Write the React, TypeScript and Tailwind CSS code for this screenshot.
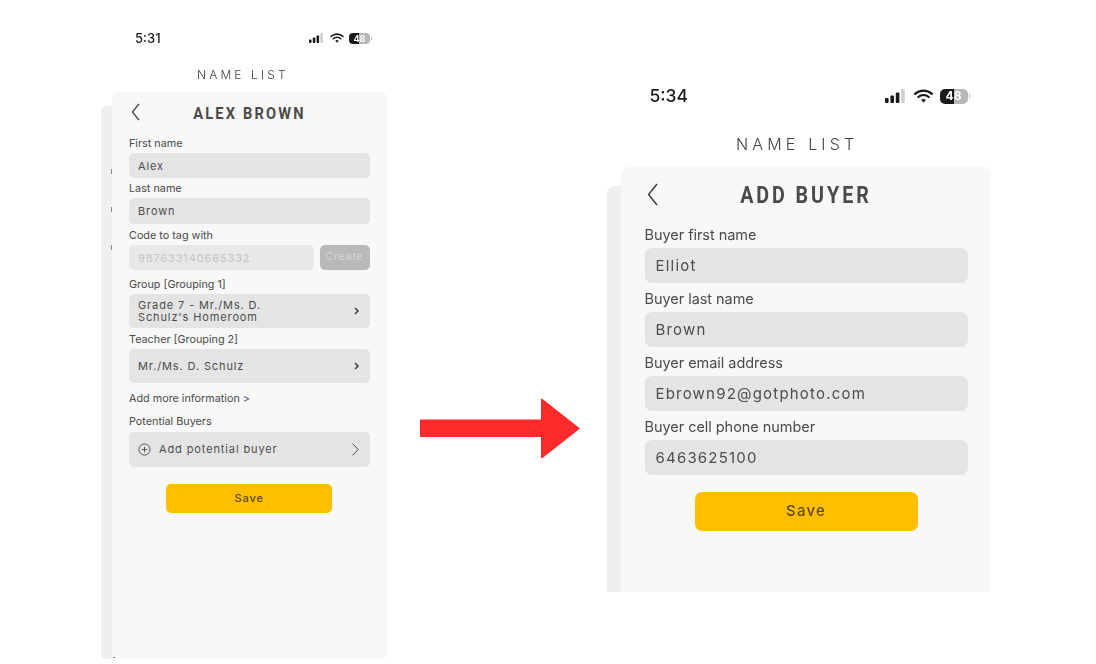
const sans = "font-['Inter','Liberation_Sans',sans-serif]"

const StatusIcons = ({ big }: { big?: boolean }) => (
  <div className="flex items-center">
    <svg viewBox="0 0 20 14" className={big ? "w-[20px] h-[14px]" : "w-[14px] h-[10px]"}>
      <rect x="0" y="9" width="3.6" height="5" rx="1" fill="#1a1a1a" />
      <rect x="5.4" y="6.4" width="3.6" height="7.6" rx="1" fill="#1a1a1a" />
      <rect x="10.8" y="3.4" width="3.6" height="10.6" rx="1" fill="#1a1a1a" />
      <rect x="16.2" y="0" width="3.6" height="14" rx="1" fill="#cfcfcf" />
    </svg>
    <svg viewBox="0 0 20 15" className={big ? "ml-[9px] w-[19px] h-[14px]" : "ml-[7px] w-[14px] h-[10px]"}>
      <path d="M1 5.2C6 .6 14 .6 19 5.2" fill="none" stroke="#1a1a1a" strokeWidth="2.4" strokeLinecap="round" />
      <path d="M4.4 8.6c3.2-2.9 8-2.9 11.2 0" fill="none" stroke="#1a1a1a" strokeWidth="2.4" strokeLinecap="round" />
      <path d="M7.4 11.6c1.5-1.3 3.7-1.3 5.2 0L10 14.6z" fill="#1a1a1a" />
    </svg>
    <div className={big ? "ml-[7px] flex items-center" : "ml-[5px] flex items-center"}>
      <div
        className={
          (big ? "w-[28px] h-[15px] text-[12px] rounded-[5px]" : "w-[21px] h-[11px] text-[9px] rounded-[4px]") +
          ` flex items-center justify-center overflow-hidden font-bold leading-none text-white bg-[linear-gradient(90deg,#1a1a1a_0,#1a1a1a_50%,#b8b8b8_50%,#b8b8b8_100%)] ${sans}`
        }
      >
        48
      </div>
      <div className={big ? "ml-[1px] w-[1px] h-[4px] bg-[#b8b8b8]" : "ml-[1px] w-[1px] h-[3px] bg-[#b8b8b8]"} />
    </div>
  </div>
)

const Back = ({ big }: { big?: boolean }) => (
  <svg viewBox="0 0 11 23" className={big ? "w-[11px] h-[23px]" : "w-[9px] h-[18px]"}>
    <path d="M10 1 1.6 11.5 10 22" fill="none" stroke="#3d3d3d" strokeWidth={big ? 1.5 : 1.6} />
  </svg>
)

const Chevron = () => (
  <svg viewBox="0 0 5 8" className="w-[5px] h-[8px]">
    <path d="M1 1l3 3-3 3" fill="none" stroke="#333" strokeWidth="1.4" />
  </svg>
)

const Label = ({ text, className }: { text: string; className?: string }) => (
  <p className={`h-[15px] text-[10.8px] leading-[15px] text-[#4a4a4a] ${sans} ${className ?? ""}`}>{text}</p>
)

const SmallInput = ({ value, className }: { value: string; className?: string }) => (
  <div
    className={`flex items-center rounded-[5px] bg-[#e4e4e4] pl-[9px] pt-[1px] text-[11px] tracking-[0.08em] text-[#4d4d4d] ${sans} ${className ?? ""}`}
  >
    {value}
  </div>
)

const BigField = ({ label, value }: { label: string; value: string }) => (
  <div>
    <p className={`h-[22px] text-[14.5px] leading-[22px] tracking-[-0.003em] text-[#4a4a4a] ${sans}`}>{label}</p>
    <div
      className={`mt-[2px] flex h-[35px] items-center rounded-[7px] bg-[#e4e4e4] pl-[11px] pt-[2px] text-[15px] tracking-[0.08em] text-[#4d4d4d] ${sans}`}
    >
      {value}
    </div>
  </div>
)

const App = () => {
  return (
    <div className="flex h-[664px] w-[1096px] items-start overflow-hidden bg-white pl-[101px]">
      <div className="flex h-[659px] w-[286px] flex-col pt-[29px] blur-[0.35px]">
        <div className="flex h-[18px] items-center justify-between pl-[34px] pr-[15px]">
          <span className={`pt-[1px] text-[13px] font-medium text-[#1a1a1a] ${sans}`}>5:31</span>
          <StatusIcons />
        </div>
        <p
          className={`mt-[20px] h-[16px] pl-[96px] text-[12px] font-light leading-[16px] tracking-[0.26em] text-[#3f3f3f] ${sans}`}
        >
          NAME LIST
        </p>
        <div className="mt-[9px] flex flex-1">
          <div className="relative mt-[14px] w-[11px] rounded-l-[5px] bg-[#efefef]">
            <div className="absolute right-0 top-[63px] h-[5px] w-[1px] bg-[#8a8a8a]" />
            <div className="absolute right-0 top-[101px] h-[5px] w-[1px] bg-[#8a8a8a]" />
            <div className="absolute right-0 top-[139px] h-[5px] w-[1px] bg-[#8a8a8a]" />
          </div>
          <div className="relative flex-1 rounded-[6px] rounded-bl-none bg-[#f8f8f8] pl-[17px] pr-[17.5px]">
            <div className="absolute bottom-[1px] left-[1px] h-[1px] w-[2px] bg-[#777777]" />
            <div className="relative flex h-[43.5px] items-start justify-center pt-[11px]">
              <div className="absolute left-[2px] top-[11px]">
                <Back />
              </div>
              <h1 className="scale-x-[0.86] font-['Roboto',sans-serif] text-[17px] font-bold leading-[20px] tracking-[0.15em] text-[#4a4a4a]">
                ALEX BROWN
              </h1>
            </div>
            <Label text="First name" />
            <SmallInput value="Alex" className="mt-[2.5px] h-[25px]" />
            <Label text="Last name" className="mt-[2.5px]" />
            <SmallInput value="Brown" className="mt-[2.5px] h-[26px]" />
            <Label text="Code to tag with" className="mt-[3.5px]" />
            <div className="mt-[2px] flex h-[25.5px] gap-[6px]">
              <SmallInput value="987633140665332" className="flex-1 bg-[#e8e8e8] text-[#c4c4c4]" />
              <div
                className={`flex w-[50px] items-center justify-center rounded-[5px] bg-[#b9b9b9] text-[10.5px] tracking-[0.08em] text-[#d5d5d5] ${sans}`}
              >
                Create
              </div>
            </div>
            <Label text="Group [Grouping 1]" className="mt-[6.5px]" />
            <div className="mt-[2.5px] flex h-[34px] items-center justify-between rounded-[5px] bg-[#e4e4e4] pl-[9px] pr-[11px]">
              <p className={`text-[11px] leading-[12px] tracking-[0.08em] text-[#4d4d4d] ${sans}`}>
                Grade 7 - Mr./Ms. D.
                <br />
                Schulz's Homeroom
              </p>
              <Chevron />
            </div>
            <Label text="Teacher [Grouping 2]" className="mt-[3.5px]" />
            <div className="mt-[2px] flex h-[34.5px] items-center justify-between rounded-[5px] bg-[#e4e4e4] pl-[9px] pr-[11px]">
              <span className={`text-[11px] tracking-[0.08em] text-[#4d4d4d] ${sans}`}>Mr./Ms. D. Schulz</span>
              <Chevron />
            </div>
            <Label text="Add more information >" className="mt-[7.5px]" />
            <Label text="Potential Buyers" className="mt-[8px]" />
            <div className="mt-[3.5px] flex h-[34.5px] items-center rounded-[5px] bg-[#e4e4e4] pl-[9px] pr-[11px]">
              <svg viewBox="0 0 14 14" className="h-[13px] w-[13px]">
                <circle cx="7" cy="7" r="6" fill="none" stroke="#4d4d4d" strokeWidth="1" />
                <path d="M7 4v6M4 7h6" fill="none" stroke="#4d4d4d" strokeWidth="1" />
              </svg>
              <span className={`ml-[8px] flex-1 text-[11px] tracking-[0.08em] text-[#4d4d4d] ${sans}`}>
                Add potential buyer
              </span>
              <svg viewBox="0 0 7 13" className="h-[13px] w-[7px]">
                <path d="M.7.7 6.2 6.5.7 12.3" fill="none" stroke="#4d4d4d" strokeWidth="1" />
              </svg>
            </div>
            <div
              className={`mx-auto mt-[17.5px] flex h-[28.5px] w-[166px] items-center justify-center rounded-[5px] bg-[#ffbe00] text-[11px] font-medium tracking-[0.08em] text-[#5a4a14] ${sans}`}
            >
              Save
            </div>
          </div>
        </div>
      </div>

      <svg viewBox="0 0 161 62" className="ml-[33px] mt-[398px] h-[62px] w-[161px] shrink-0">
        <path d="M0 21.5H121V1.5Q121 0 122.5 1L160 30.5 122.5 60Q121 61 121 59.5V39H0Z" fill="#fb2b2b" />
      </svg>

      <div className="ml-[25.5px] flex h-[592px] w-[384.5px] shrink-0 flex-col pt-[84px] blur-[0.35px]">
        <div className="flex h-[24px] items-center justify-between pl-[43px] pr-[21.5px]">
          <span className={`text-[17.5px] font-medium text-[#1a1a1a] ${sans}`}>5:34</span>
          <StatusIcons big />
        </div>
        <p
          className={`mt-[26px] h-[20px] pl-[129.5px] text-[16px] font-light leading-[20px] tracking-[0.26em] text-[#3f3f3f] ${sans}`}
        >
          NAME LIST
        </p>
        <div className="mt-[13px] flex flex-1">
          <div className="mt-[19px] w-[14.5px] rounded-tl-[7px] bg-[#efefef]" />
          <div className="flex-1 rounded-t-[8px] bg-[#f8f8f8] pl-[23.5px] pr-[23.5px]">
            <div className="relative flex h-[57px] items-start justify-center pt-[15px]">
              <div className="absolute left-[2px] top-[16px]">
                <Back big />
              </div>
              <h1 className="scale-x-[0.855] font-['Roboto',sans-serif] text-[23px] font-bold leading-[28px] tracking-[0.15em] text-[#4a4a4a]">
                ADD BUYER
              </h1>
            </div>
            <div className="flex flex-col gap-[5px]">
              <BigField label="Buyer first name" value="Elliot" />
              <BigField label="Buyer last name" value="Brown" />
              <BigField label="Buyer email address" value="Ebrown92@gotphoto.com" />
              <BigField label="Buyer cell phone number" value="6463625100" />
            </div>
            <div
              className={`mx-auto mt-[17px] flex h-[38.5px] w-[223px] items-center justify-center rounded-[7px] bg-[#ffbe00] text-[15px] font-medium tracking-[0.08em] text-[#5a4a14] ${sans}`}
            >
              Save
            </div>
          </div>
        </div>
      </div>
    </div>
  )
}

export default App
